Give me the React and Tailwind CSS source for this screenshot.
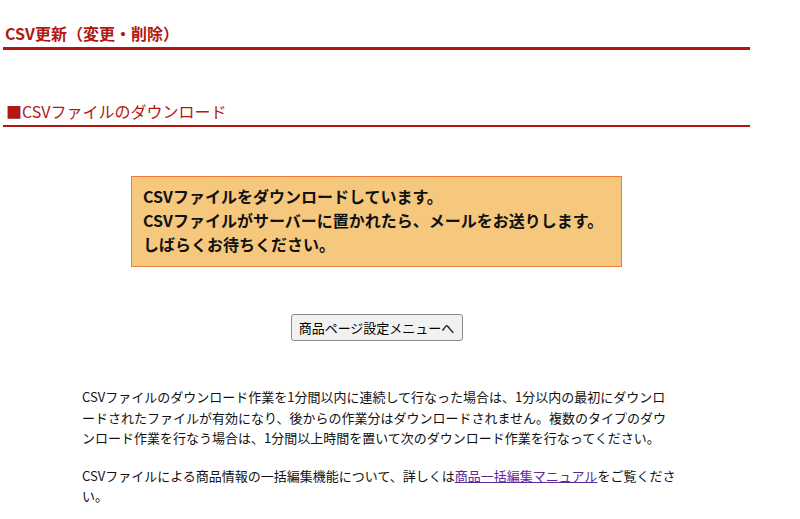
const font = {
  fontFamily: '"Noto Sans CJK JP", "Noto Sans", sans-serif',
};

const App = () => {
  return (
    <div className="min-h-[519px] bg-white text-black" style={font}>
      <div className="ml-[3px] w-[747px]">
        <h1 className="pt-[23px] pb-[4px] pl-[2px] text-[16px] leading-[20px] font-bold text-[#b3170f] border-b-[3px] border-[#b3170f]">
          CSV更新（変更・削除）
        </h1>

        <h2 className="mt-[51px] pb-[4px] pl-[3px] text-[16px] leading-[20px] font-normal text-[#b3170f] border-b-2 border-[#b3170f]">
          ■CSVファイルのダウンロード
        </h2>

        <div className="mx-auto mt-[49px] w-[491px] h-[91px] border border-[#ef7d3a] bg-[#f5c87e] pt-[7px] pl-[11px]">
          <p className="text-[16px] leading-[24px] font-bold text-[#111]">
            CSVファイルをダウンロードしています。
            <br />
            CSVファイルがサーバーに置かれたら、メールをお送りします。
            <br />
            しばらくお待ちください。
          </p>
        </div>

        <div className="mt-[47px] flex justify-center">
          <button className="h-[27px] w-[172px] rounded-[3px] border border-[#8a8a8a] bg-[#f1f1f1] text-[13px] leading-[25px] text-black">
            商品ページ設定メニューへ
          </button>
        </div>

        <div className="ml-[79px] mt-[46px] w-[595px] text-[13px] leading-[20.5px] text-[#111]">
          <p>
            CSVファイルのダウンロード作業を1分間以内に連続して行なった場合は、1分以内の最初にダウンロードされたファイルが有効になり、後からの作業分はダウンロードされません。複数のタイプのダウンロード作業を行なう場合は、1分間以上時間を置いて次のダウンロード作業を行なってください。
          </p>
          <p className="mt-[17px]">
            CSVファイルによる商品情報の一括編集機能について、詳しくは
            <a href="#" className="text-[#5b2a9a] underline">
              商品一括編集マニュアル
            </a>
            をご覧ください。
          </p>
        </div>
      </div>
    </div>
  );
};

export default App;
